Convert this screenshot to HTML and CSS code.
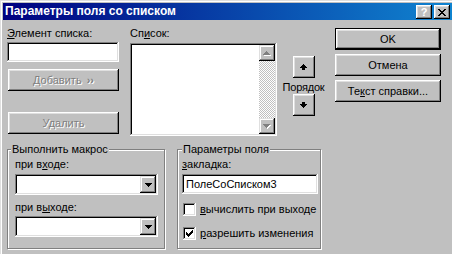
FILE: index.html
```html
<!DOCTYPE html>
<html lang="ru">
<head>
    <meta charset="UTF-8">
    <title>Параметры поля со списком</title>
    <link rel="stylesheet" href="styles.css">
</head>
<body>
    <div class="window">
        <div class="titlebar">
            <span class="title">Параметры поля со списком</span>
            <div class="title-buttons">
                <button class="tbtn help">?</button>
                <button class="tbtn close">
                    <svg width="8" height="7" viewBox="0 0 8 7" shape-rendering="crispEdges">
                        <path d="M0 0h2v1h1v1h2v-1h1v-1h2v1h-1v1h-1v1h-1v1h1v1h1v1h1v1h-2v-1h-1v-1h-2v1h-1v1h-2v-1h1v-1h1v-1h1v-1h-1v-1h-1v-1h-1z" fill="#000"/>
                    </svg>
                </button>
            </div>
        </div>

        <div class="content">
            <div class="top">
                <div class="col-item">
                    <div class="label"><u>Э</u>лемент списка:</div>
                    <div class="field sunken item-field"></div>
                    <button class="btn disabled add">Добавить <span class="more">››</span></button>
                    <button class="btn disabled del">Удалить</button>
                </div>

                <div class="col-list">
                    <div class="label">Сп<u>и</u>сок:</div>
                    <div class="listbox sunken">
                        <div class="list-items"></div>
                        <div class="vscroll">
                            <div class="sbtn">
                                <svg width="8" height="5" viewBox="0 0 8 5" shape-rendering="crispEdges">
                                    <path d="M4 1h1v1h1v1h1v1h1v1h-7v-1h1v-1h1v-1h1z" fill="#fff"/>
                                    <path d="M3 0h1v1h1v1h1v1h1v1h-7v-1h1v-1h1v-1h1z" fill="#808080"/>
                                </svg>
                            </div>
                            <div class="track"></div>
                            <div class="sbtn">
                                <svg width="8" height="5" viewBox="0 0 8 5" shape-rendering="crispEdges">
                                    <path d="M1 1h7v1h-1v1h-1v1h-1v1h-1v-1h-1v-1h-1v-1h-1z" fill="#fff"/>
                                    <path d="M0 0h7v1h-1v1h-1v1h-1v1h-1v-1h-1v-1h-1v-1h-1z" fill="#808080"/>
                                </svg>
                            </div>
                        </div>
                    </div>
                </div>

                <div class="col-order">
                    <button class="btn square up">
                        <svg width="7" height="6" viewBox="0 0 7 6" shape-rendering="crispEdges">
                            <path d="M3 0h1v1h1v1h1v1h1v1h-2v2h-3v-2h-2v-1h1v-1h1v-1h1z" fill="#000"/>
                        </svg>
                    </button>
                    <span class="order-label">Порядок</span>
                    <button class="btn square down">
                        <svg width="7" height="6" viewBox="0 0 7 6" shape-rendering="crispEdges">
                            <path d="M2 0h3v2h2v1h-1v1h-1v1h-1v1h-1v-1h-1v-1h-1v-1h-1v-1h2z" fill="#000"/>
                        </svg>
                    </button>
                </div>

                <div class="col-actions">
                    <button class="btn default">OK</button>
                    <button class="btn">Отмена</button>
                    <button class="btn">Те<u>к</u>ст справки...</button>
                </div>
            </div>

            <div class="bottom">
                <div class="group macro">
                    <div class="legend">Выполнить макрос</div>
                    <div class="label first">при в<u>х</u>оде:</div>
                    <div class="combo sunken">
                        <div class="combo-value"></div>
                        <div class="combo-btn">
                            <svg width="7" height="4" viewBox="0 0 7 4" shape-rendering="crispEdges">
                                <path d="M0 0h7v1h-1v1h-1v1h-1v1h-1v-1h-1v-1h-1v-1h-1z" fill="#000"/>
                            </svg>
                        </div>
                    </div>
                    <div class="label second">при в<u>ы</u>ходе:</div>
                    <div class="combo sunken last">
                        <div class="combo-value"></div>
                        <div class="combo-btn">
                            <svg width="7" height="4" viewBox="0 0 7 4" shape-rendering="crispEdges">
                                <path d="M0 0h7v1h-1v1h-1v1h-1v1h-1v-1h-1v-1h-1v-1h-1z" fill="#000"/>
                            </svg>
                        </div>
                    </div>
                </div>

                <div class="group params">
                    <div class="legend">Параметры поля</div>
                    <div class="label first"><u>з</u>акладка:</div>
                    <div class="field sunken bookmark">ПолеСоСписком3</div>
                    <div class="check-row calc">
                        <span class="checkbox sunken"></span>
                        <span><u>в</u>ычислить при выходе</span>
                    </div>
                    <div class="check-row allow">
                        <span class="checkbox sunken">
                            <svg width="7" height="7" viewBox="0 0 7 7" shape-rendering="crispEdges">
                                <path d="M6 0h1v3h-1v1h-1v1h-1v1h-1v1h-1v-1h-1v-1h-1v-3h1v1h1v1h1v-1h1v-1h1z" fill="#000"/>
                            </svg>
                        </span>
                        <span><u>р</u>азрешить изменения</span>
                    </div>
                </div>
            </div>
        </div>
    </div>
</body>
</html>
```

FILE: styles.css
```css
* {
    margin: 0;
    padding: 0;
    box-sizing: border-box;
}

html, body {
    width: 452px;
    height: 254px;
    overflow: hidden;
}

body {
    background: #c0c0c0;
    font-family: "Liberation Sans", Arial, sans-serif;
    font-size: 11px;
    line-height: 13px;
    color: #000;
}

button {
    font: inherit;
    color: inherit;
    border: none;
    background: #c0c0c0;
}

u {
    text-decoration: underline;
    text-underline-offset: 1px;
}

.window {
    height: 254px;
    border-left: 1px solid #dfdfdf;
    border-top: 1px solid #dfdfdf;
    box-shadow: inset 1px 1px #fff;
    padding: 2px 0 0 2px;
}

/* title bar */
.titlebar {
    height: 17px;
    display: flex;
    align-items: center;
    justify-content: space-between;
    padding: 0 2px;
    background: linear-gradient(90deg, #000080, #1084d0);
    color: #fff;
}

.title {
    font-weight: bold;
    font-size: 12px;
}

.title-buttons {
    display: flex;
    gap: 2px;
    margin-top: 1px;
}

.tbtn {
    width: 16px;
    height: 14px;
    display: flex;
    align-items: center;
    justify-content: center;
    box-shadow: inset -1px -1px #000, inset 1px 1px #fff, inset -2px -2px #808080, inset 2px 2px #dfdfdf;
}

.tbtn.help {
    font-weight: bold;
    font-size: 11px;
    padding-top: 1px;
}

/* common controls */
.btn {
    display: flex;
    align-items: center;
    justify-content: center;
    height: 22px;
    box-shadow: inset -1px -1px #000, inset 1px 1px #fff, inset -2px -2px #808080, inset 2px 2px #dfdfdf;
}

.btn.default {
    border: 1px solid #000;
}

.btn.disabled {
    color: #808080;
    text-shadow: 1px 1px #fff;
}

.sunken {
    background: #fff;
    box-shadow: inset -1px -1px #fff, inset 1px 1px #808080, inset -2px -2px #dfdfdf, inset 2px 2px #000;
}

.label {
    height: 13px;
    white-space: nowrap;
}

.content {
    padding: 7px 0 0 4px;
}

.top {
    display: flex;
    align-items: flex-start;
}

/* list item column */
.col-item {
    width: 112px;
}

.item-field {
    margin-top: 2px;
    height: 20px;
}

.add, .del {
    width: 111px;
    margin-left: 1px;
}

.add {
    margin-top: 7px;
}

.more {
    font-size: 11px;
    font-weight: bold;
    margin-left: 5px;
    letter-spacing: 0;
}

.del {
    margin-top: 21px;
}

/* list column */
.col-list {
    width: 147px;
    margin-left: 11px;
}

.listbox {
    margin-top: 3px;
    height: 93px;
    padding: 2px;
    display: flex;
}

.list-items {
    flex: 1;
}

.vscroll {
    width: 16px;
    display: flex;
    flex-direction: column;
}

.sbtn {
    height: 16px;
    display: flex;
    align-items: center;
    justify-content: center;
    background: #c0c0c0;
    box-shadow: inset -1px -1px #000, inset 1px 1px #dfdfdf, inset -2px -2px #808080, inset 2px 2px #fff;
}

.track {
    flex: 1;
    background: repeating-conic-gradient(#fff 0 25%, #c0c0c0 0 50%) 0 0 / 2px 2px;
}

/* order column */
.col-order {
    width: 49px;
    margin-left: 2px;
    display: flex;
    flex-direction: column;
    align-items: center;
}

.btn.square {
    width: 22px;
    height: 22px;
}

.up {
    margin-top: 29px;
}

.order-label {
    margin-top: 3px;
    height: 13px;
    letter-spacing: -0.2px;
}

/* actions column */
.col-actions {
    width: 106px;
    margin-left: 7px;
    margin-top: 1px;
    display: flex;
    flex-direction: column;
    gap: 4px;
}

/* group boxes */
.bottom {
    display: flex;
    margin-top: 13px;
}

.group {
    height: 100px;
    border: 1px solid #808080;
    box-shadow: inset 1px 1px #fff, 1px 1px #fff;
}

.legend {
    width: max-content;
    margin-top: -7px;
    padding: 0 1px;
    height: 13px;
    background: #c0c0c0;
}

.macro {
    width: 158px;
    padding: 0 6px 0 7px;
}

.macro .legend {
    margin-left: -4px;
}

.params {
    width: 144px;
    margin-left: 12px;
    padding: 0 2px 0 4px;
}

.label.first {
    margin-top: 2px;
}

.combo {
    margin-top: 3px;
    height: 21px;
    padding: 2px;
    display: flex;
}

.combo.last {
    margin-top: 2px;
}

.label.second {
    margin-top: 6px;
}

.combo-value {
    flex: 1;
}

.combo-btn {
    width: 16px;
    display: flex;
    align-items: center;
    justify-content: center;
    background: #c0c0c0;
    box-shadow: inset -1px -1px #000, inset 1px 1px #dfdfdf, inset -2px -2px #808080, inset 2px 2px #fff;
}

.bookmark {
    margin-top: 3px;
    height: 20px;
    padding: 0 4px;
    display: flex;
    align-items: center;
}

.check-row {
    display: flex;
    align-items: center;
    height: 13px;
    white-space: nowrap;
}

.check-row.calc {
    margin-top: 9px;
}

.check-row.allow {
    margin-top: 11px;
}

.checkbox {
    width: 13px;
    height: 13px;
    margin: 0 4px 0 1px;
    display: flex;
    align-items: center;
    justify-content: center;
}
```
